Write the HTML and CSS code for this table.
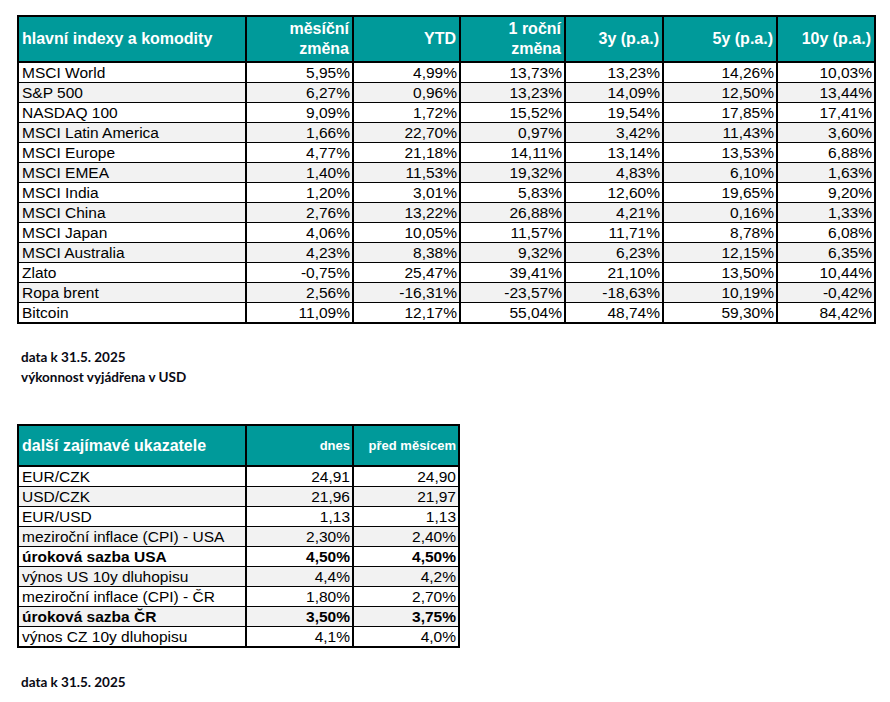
FILE: index.html
```html
<!DOCTYPE html>
<html lang="cs">
<head>
<meta charset="utf-8">
<title>Indexy a ukazatele</title>
<link rel="stylesheet" href="styles.css">
</head>
<body>
<div class="page">
  <div class="grid t1">
    <div class="h first">hlavní indexy a komodity</div>
    <div class="h num">měsíční<br>změna</div>
    <div class="h num">YTD</div>
    <div class="h num">1 roční<br>změna</div>
    <div class="h num">3y (p.a.)</div>
    <div class="h num">5y (p.a.)</div>
    <div class="h num">10y (p.a.)</div>

    <div class="c">MSCI World</div><div class="c n">5,95%</div><div class="c n">4,99%</div><div class="c n">13,73%</div><div class="c n">13,23%</div><div class="c n">14,26%</div><div class="c n">10,03%</div>
    <div class="c g">S&amp;P 500</div><div class="c n g">6,27%</div><div class="c n g">0,96%</div><div class="c n g">13,23%</div><div class="c n g">14,09%</div><div class="c n g">12,50%</div><div class="c n g">13,44%</div>
    <div class="c">NASDAQ 100</div><div class="c n">9,09%</div><div class="c n">1,72%</div><div class="c n">15,52%</div><div class="c n">19,54%</div><div class="c n">17,85%</div><div class="c n">17,41%</div>
    <div class="c g">MSCI Latin America</div><div class="c n g">1,66%</div><div class="c n g">22,70%</div><div class="c n g">0,97%</div><div class="c n g">3,42%</div><div class="c n g">11,43%</div><div class="c n g">3,60%</div>
    <div class="c">MSCI Europe</div><div class="c n">4,77%</div><div class="c n">21,18%</div><div class="c n">14,11%</div><div class="c n">13,14%</div><div class="c n">13,53%</div><div class="c n">6,88%</div>
    <div class="c g">MSCI EMEA</div><div class="c n g">1,40%</div><div class="c n g">11,53%</div><div class="c n g">19,32%</div><div class="c n g">4,83%</div><div class="c n g">6,10%</div><div class="c n g">1,63%</div>
    <div class="c">MSCI India</div><div class="c n">1,20%</div><div class="c n">3,01%</div><div class="c n">5,83%</div><div class="c n">12,60%</div><div class="c n">19,65%</div><div class="c n">9,20%</div>
    <div class="c g">MSCI China</div><div class="c n g">2,76%</div><div class="c n g">13,22%</div><div class="c n g">26,88%</div><div class="c n g">4,21%</div><div class="c n g">0,16%</div><div class="c n g">1,33%</div>
    <div class="c">MSCI Japan</div><div class="c n">4,06%</div><div class="c n">10,05%</div><div class="c n">11,57%</div><div class="c n">11,71%</div><div class="c n">8,78%</div><div class="c n">6,08%</div>
    <div class="c g">MSCI Australia</div><div class="c n g">4,23%</div><div class="c n g">8,38%</div><div class="c n g">9,32%</div><div class="c n g">6,23%</div><div class="c n g">12,15%</div><div class="c n g">6,35%</div>
    <div class="c">Zlato</div><div class="c n">-0,75%</div><div class="c n">25,47%</div><div class="c n">39,41%</div><div class="c n">21,10%</div><div class="c n">13,50%</div><div class="c n">10,44%</div>
    <div class="c g">Ropa brent</div><div class="c n g">2,56%</div><div class="c n g">-16,31%</div><div class="c n g">-23,57%</div><div class="c n g">-18,63%</div><div class="c n g">10,19%</div><div class="c n g">-0,42%</div>
    <div class="c">Bitcoin</div><div class="c n">11,09%</div><div class="c n">12,17%</div><div class="c n">55,04%</div><div class="c n">48,74%</div><div class="c n">59,30%</div><div class="c n">84,42%</div>
  </div>

  <div class="notes n1">
    <p>data k 31.5. 2025</p>
    <p>výkonnost vyjádřena v USD</p>
  </div>

  <div class="grid t2">
    <div class="h first">další zajímavé ukazatele</div>
    <div class="h num small">dnes</div>
    <div class="h num small">před měsícem</div>

    <div class="c">EUR/CZK</div><div class="c n">24,91</div><div class="c n">24,90</div>
    <div class="c g">USD/CZK</div><div class="c n g">21,96</div><div class="c n g">21,97</div>
    <div class="c">EUR/USD</div><div class="c n">1,13</div><div class="c n">1,13</div>
    <div class="c g">meziroční inflace (CPI) - USA</div><div class="c n g">2,30%</div><div class="c n g">2,40%</div>
    <div class="c b">úroková sazba USA</div><div class="c n b">4,50%</div><div class="c n b">4,50%</div>
    <div class="c g">výnos US 10y dluhopisu</div><div class="c n g">4,4%</div><div class="c n g">4,2%</div>
    <div class="c">meziroční inflace (CPI) - ČR</div><div class="c n">1,80%</div><div class="c n">2,70%</div>
    <div class="c g b">úroková sazba ČR</div><div class="c n g b">3,50%</div><div class="c n g b">3,75%</div>
    <div class="c">výnos CZ 10y dluhopisu</div><div class="c n">4,1%</div><div class="c n">4,0%</div>
  </div>

  <div class="notes n2">
    <p>data k 31.5. 2025</p>
  </div>
</div>
</body>
</html>
```

FILE: styles.css
```css
html, body {
  margin: 0;
  padding: 0;
  background: #ffffff;
}

.page {
  padding: 15px 0 0 17px;
  font-family: "Liberation Sans", Arial, sans-serif;
  color: #000;
}

.grid {
  display: grid;
  background: #000;
  padding: 2px;
  column-gap: 2px;
  row-gap: 1px;
  width: max-content;
}

.t1 {
  grid-template-columns: 226px 105px 105px 103px 96px 112px 96px;
  grid-template-rows: 45px;
  grid-auto-rows: 19px;
}

.t2 {
  grid-template-columns: 226px 105px 104px;
  grid-template-rows: 40px;
  grid-auto-rows: 19px;
}

.h {
  background: #009a9a;
  color: #fff;
  font-weight: bold;
  font-size: 16px;
  line-height: 20px;
  border-bottom: 1px solid #000;
  display: flex;
  align-items: center;
  padding: 0 3px;
}

.h.num {
  justify-content: flex-end;
  text-align: right;
}

.h.small {
  font-size: 13px;
  padding-right: 2px;
}

.c {
  background: #fff;
  font-size: 15.5px;
  line-height: 18px;
  padding: 1px 3px 0 3px;
  white-space: nowrap;
}

.c.n {
  text-align: right;
  padding: 1px 2px 0 0;
}

.c.g {
  background: #f2f2f2;
}

.c.b {
  font-weight: bold;
}

.notes {
  font-family: Lato, "Open Sans", sans-serif;
  font-weight: bold;
  font-size: 13.5px;
  line-height: 20px;
  margin-left: 4px;
  color: #0a0a14;
}

.notes p {
  margin: 0;
}

.n1 {
  margin-top: 23px;
  margin-bottom: 37px;
}

.n2 {
  margin-top: 24px;
}
```
